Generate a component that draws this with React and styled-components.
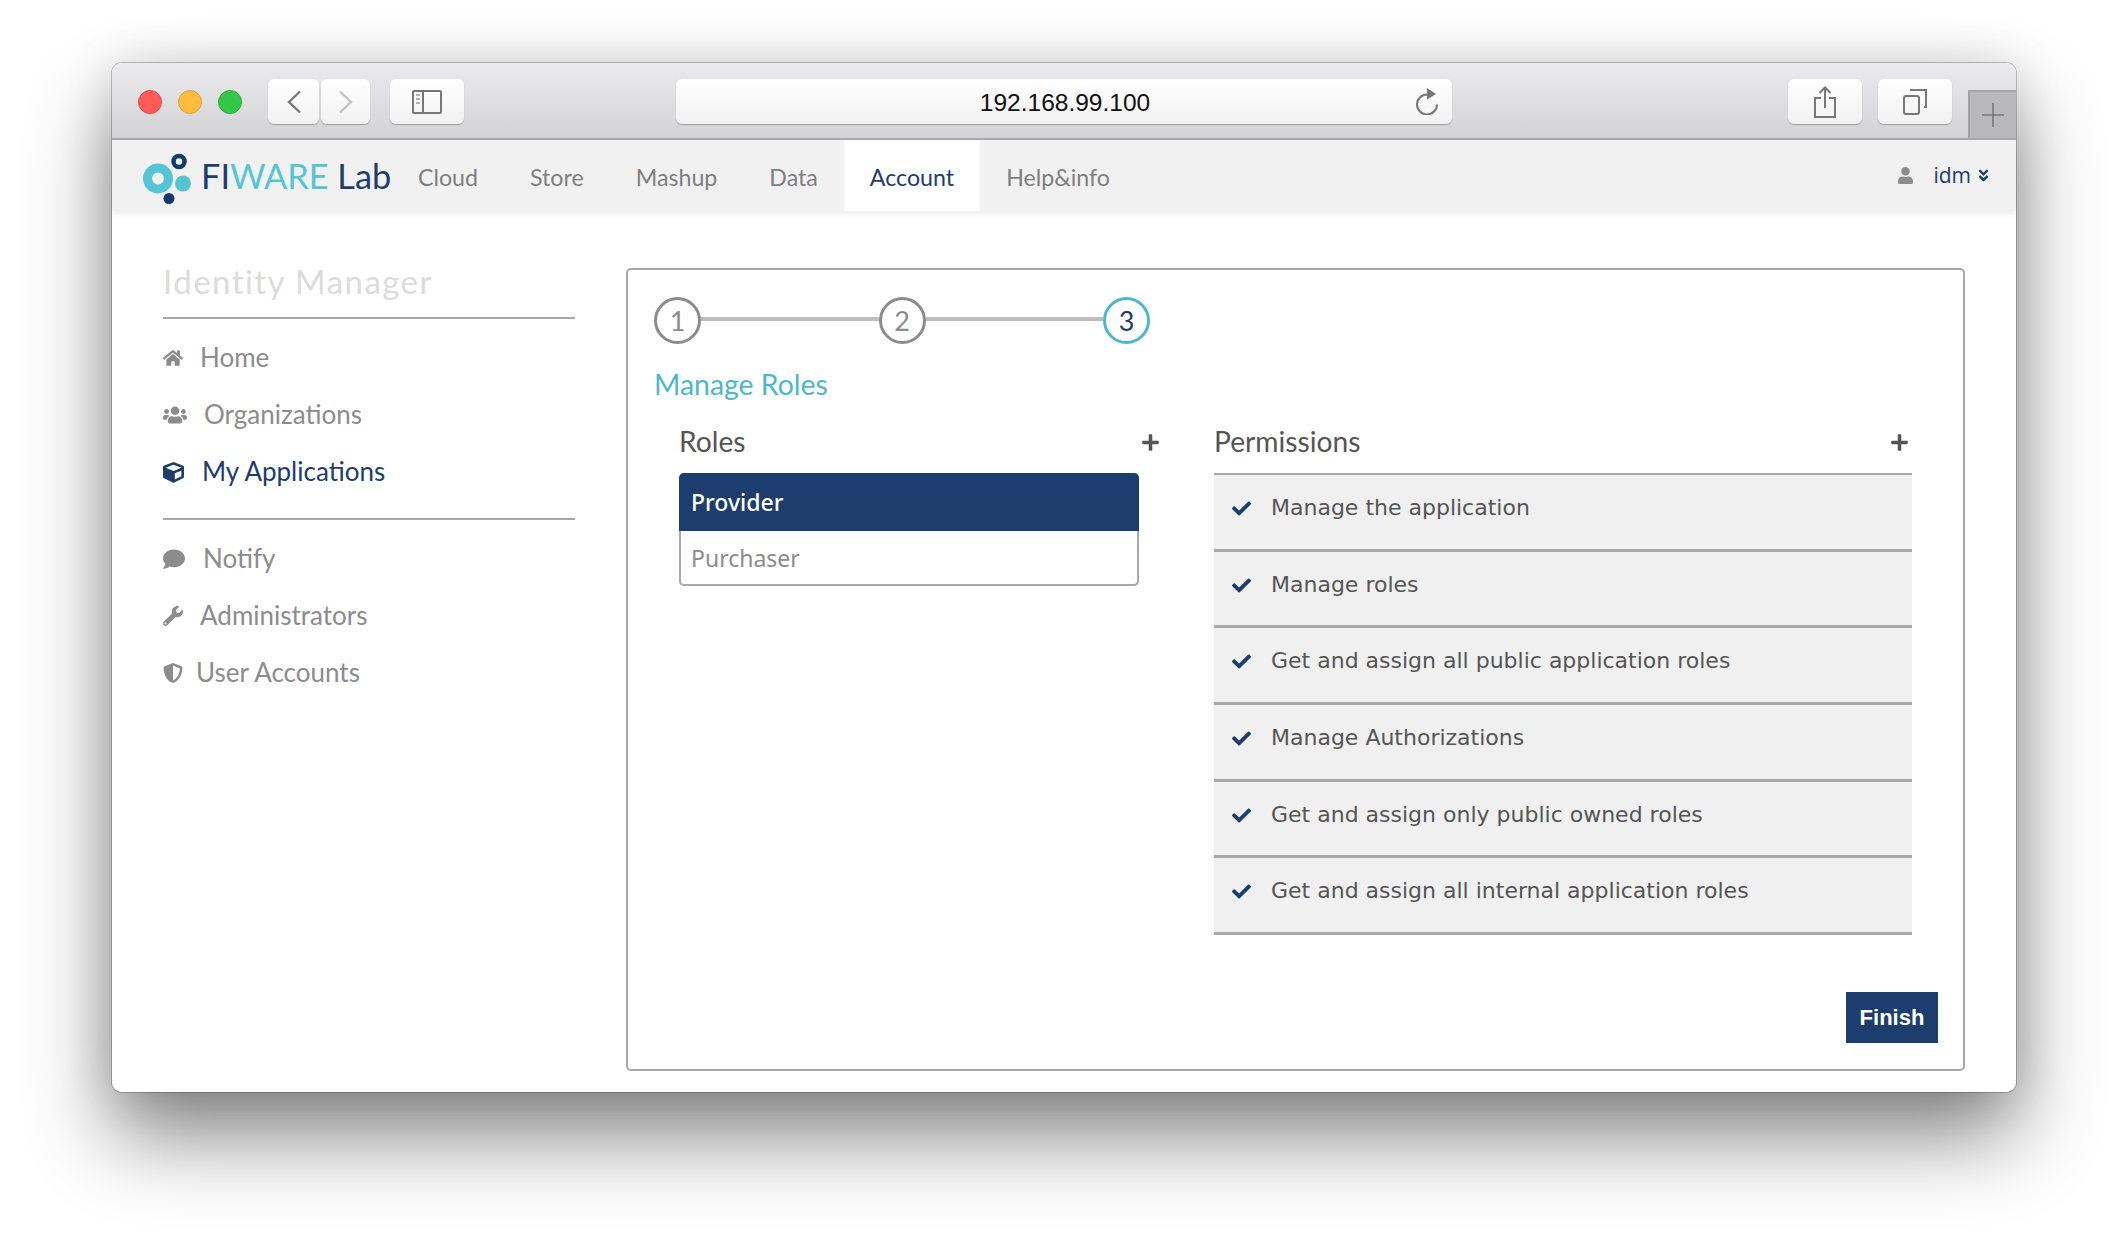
import * as React from "react"
import styled, { createGlobalStyle } from "styled-components"
import {
  FaHome,
  FaUsers,
  FaCube,
  FaComment,
  FaWrench,
  FaShieldAlt,
  FaCheck,
  FaPlus,
  FaUser,
  FaAngleDoubleDown,
} from "react-icons/fa"

const navy = "#1c3d6e"
const teal = "#4db8cb"
const grey = "#8c8c8c"
const rule = "#a8a8a8"

const GlobalStyle = createGlobalStyle`
  html, body {
    margin: 0;
    background: #fff;
  }
  * {
    box-sizing: border-box;
  }
`

const Page = styled.div`
  width: 2128px;
  height: 1252px;
  padding: 63px 112px 0;
  overflow: hidden;
  background: #fff;
`

const Window = styled.div`
  width: 1904px;
  height: 1029px;
  display: flex;
  flex-direction: column;
  background: #fff;
  border-radius: 10px;
  overflow: hidden;
`

const WindowShadow = styled.div`
  border-radius: 10px;
  box-shadow: 0 44px 84px rgba(0, 0, 0, 0.48), 0 0 0 1px rgba(0, 0, 0, 0.22), 0 0 50px rgba(0, 0, 0, 0.12);
`

const TitleBar = styled.div`
  height: 77px;
  flex: none;
  display: flex;
  background: linear-gradient(#ebebed, #d3d2d4);
  border-bottom: 2px solid #a5a5a7;
  padding: 16px 0 0 26px;
`

const Light = styled.span`
  width: 24px;
  height: 24px;
  margin: 11px 16px 0 0;
  border-radius: 50%;
  background: ${props => props.$color};
  border: 1px solid ${props => props.$edge};
`

const ChromeButton = styled.div`
  width: ${props => props.$width}px;
  height: 45px;
  margin-left: ${props => props.$gap}px;
  display: flex;
  align-items: center;
  justify-content: center;
  background: linear-gradient(#ffffff, #f1f1f1);
  border-radius: 6px;
  box-shadow: 0 1px 1px rgba(0, 0, 0, 0.28);
`

const UrlBar = styled.div`
  width: 776px;
  height: 45px;
  margin-left: 212px;
  padding: 0 13px 0 39px;
  display: flex;
  align-items: center;
  background: linear-gradient(#ffffff, #f1f1f1);
  border-radius: 6px;
  box-shadow: 0 1px 1px rgba(0, 0, 0, 0.28);
`

const UrlText = styled.div`
  flex: 1;
  text-align: center;
  padding-top: 2px;
  font: 400 24.5px "Liberation Sans", sans-serif;
  color: #111;
`

const NewTab = styled.div`
  width: 48px;
  height: 48px;
  margin: 11px 0 0 16px;
  align-self: flex-start;
  display: flex;
  align-items: center;
  justify-content: center;
  background: #b9b8ba;
  border: 2px solid #a5a5a7;
  border-right: 0;
  border-bottom: 0;
`

const Nav = styled.nav`
  height: 71px;
  flex: none;
  display: flex;
  align-items: stretch;
  padding: 0 25px 0 30px;
  background: #f1f1f1;
  box-shadow: 0 4px 6px #f1f1f1;
  position: relative;
`

const Logo = styled.div`
  display: flex;
  align-items: center;
  width: 250px;
  flex: none;
  svg {
    flex: none;
  }
`

const LogoText = styled.div`
  margin-left: 9px;
  font: 400 34.3px Lato, sans-serif;
  color: ${navy};
  white-space: nowrap;
`

const LogoAccent = styled.span`
  color: #55c5d6;
`

const NavItem = styled.div`
  display: flex;
  align-items: center;
  padding: 2px 26px 0;
  font: 400 23.2px Lato, sans-serif;
  color: ${props => (props.$active ? navy : "#7f7f7f")};
  background: ${props => (props.$active ? "#fff" : "transparent")};
`

const UserBox = styled.div`
  margin-left: auto;
  display: flex;
  align-items: center;
  font: 400 21px "Open Sans", sans-serif;
  color: ${navy};
  padding-bottom: 1px;
`

const UserName = styled.span`
  margin: 0 5px 0 19px;
`

const Content = styled.div`
  flex: 1;
  min-height: 0;
  display: flex;
  gap: 51px;
  padding: 50px 51px 21px;
`

const Sidebar = styled.aside`
  width: 412px;
  flex: none;
`

const SideTitle = styled.div`
  height: 40px;
  font: 400 33px/40px Lato, sans-serif;
  letter-spacing: 1.45px;
  color: #dcdcdc;
  margin-bottom: 16px;
`

const SideRule = styled.div`
  height: 2px;
  background: ${rule};
  margin-bottom: ${props => props.$after}px;
  margin-top: ${props => props.$before || 0}px;
`

const SideItem = styled.div`
  height: 57px;
  padding-bottom: 1px;
  display: flex;
  align-items: center;
  gap: ${props => props.$gap}px;
  font: 400 26px Lato, sans-serif;
  color: ${props => (props.$active ? navy : grey)};
  svg {
    flex: none;
    margin-top: 2px;
    color: ${props => (props.$active ? navy : grey)};
  }
`

const Panel = styled.section`
  flex: 1;
  margin-top: 7px;
  display: flex;
  flex-direction: column;
  border: 2px solid ${rule};
  border-radius: 5px;
  padding: 27px 25px 26px 26px;
`

const Steps = styled.div`
  width: 496px;
  display: flex;
  align-items: center;
`

const StepCircle = styled.div`
  width: 47px;
  height: 47px;
  flex: none;
  border-radius: 50%;
  display: flex;
  align-items: center;
  justify-content: center;
  border: 3px solid ${props => (props.$current ? teal : grey)};
  color: ${props => (props.$current ? navy : grey)};
  font: 400 27px Lato, sans-serif;
`

const StepLine = styled.div`
  flex: 1;
  height: 4px;
  margin-top: -4px;
  background: #bdbdbd;
`

const PanelTitle = styled.h2`
  margin: 23px 0 0;
  height: 34px;
  font: 400 28.4px/34px Lato, sans-serif;
  color: ${teal};
`

const Columns = styled.div`
  display: flex;
  gap: 54px;
  margin: 24px 26px 0 25px;
`

const RolesColumn = styled.div`
  width: 481px;
  flex: none;
`

const PermissionsColumn = styled.div`
  flex: 1;
`

const ColumnHead = styled.div`
  height: 36px;
  margin-bottom: 12px;
  padding-bottom: 4px;
  display: flex;
  align-items: center;
  justify-content: space-between;
  font: 400 28.2px Lato, sans-serif;
  color: #555;
  svg {
    color: #555;
    margin-top: 3px;
  }
`

const PermissionsHead = styled(ColumnHead)`
  padding-right: 3px;
`

const RoleList = styled.div`
  width: 460px;
  border: 2px solid ${rule};
  border-top: 0;
  border-radius: 5px;
`

const RoleItem = styled.div`
  display: flex;
  align-items: center;
  height: ${props => (props.$selected ? 58 : 53)}px;
  margin: ${props => (props.$selected ? "0 -2px" : "0")};
  padding-left: ${props => (props.$selected ? 12 : 10)}px;
  font: ${props => (props.$selected ? 500 : 400)} 23px "Noto Sans", sans-serif;
  color: ${props => (props.$selected ? "#fff" : grey)};
  background: ${props => (props.$selected ? navy : "transparent")};
  border-radius: ${props => (props.$selected ? "5px 5px 0 0" : "0 0 5px 5px")};
`

const PermissionList = styled.div`
  border-top: 2px solid ${rule};
`

const PermissionRow = styled.div`
  height: 76.67px;
  display: flex;
  align-items: flex-start;
  gap: 20px;
  padding: 18px 0 0 18px;
  background: #f0f0f0;
  border-bottom: 3px solid ${rule};
  font: 400 22px/30px "DejaVu Sans", sans-serif;
  color: #555;
  svg {
    color: ${navy};
    margin-top: 6px;
    flex: none;
  }
`

const Footer = styled.div`
  margin-top: auto;
  display: flex;
  justify-content: flex-end;
`

const FinishButton = styled.button`
  width: 92px;
  height: 51px;
  padding: 0;
  border: 0;
  background: ${navy};
  color: #fff;
  font: 700 22px "Liberation Sans", sans-serif;
`

const sideTop = [
  { label: "Home", icon: <FaHome size={20} />, gap: 17 },
  { label: "Organizations", icon: <FaUsers size={24} />, gap: 17 },
  { label: "My Applications", icon: <FaCube size={21} />, gap: 18 },
]

const sideBottom = [
  { label: "Notify", icon: <FaComment size={22} />, gap: 18 },
  { label: "Administrators", icon: <FaWrench size={20} />, gap: 17 },
  { label: "User Accounts", icon: <FaShieldAlt size={20} />, gap: 13 },
]

const navItems = ["Cloud", "Store", "Mashup", "Data", "Account", "Help&info"]

const permissions = [
  "Manage the application",
  "Manage roles",
  "Get and assign all public application roles",
  "Manage Authorizations",
  "Get and assign only public owned roles",
  "Get and assign all internal application roles",
]

const LogoMark = () => (
  <svg width="50" height="56" viewBox="0 0 50 56">
    <circle cx="16" cy="30.5" r="10.5" fill="none" stroke="#55c5d6" strokeWidth="9" />
    <circle cx="41" cy="35.5" r="8" fill="#55c5d6" />
    <circle cx="37" cy="13.5" r="5.5" fill="none" stroke="#123a6d" strokeWidth="4.5" />
    <circle cx="27" cy="50.5" r="5.5" fill="#123a6d" />
  </svg>
)

const Chevron = ({ left, color }) => (
  <svg width="16" height="24" viewBox="0 0 16 24" fill="none" stroke={color} strokeWidth="2.4">
    <path d={left ? "M14 1.5 3 12l11 10.5" : "M2 1.5 13 12 2 22.5"} />
  </svg>
)

const SidebarIcon = () => (
  <svg width="30" height="24" viewBox="0 0 30 24" fill="none" stroke="#777" strokeWidth="2">
    <rect x="1" y="1" width="28" height="22" rx="1" />
    <path d="M11 1v22" />
    <path d="M4 5h4M4 9h4M4 13h4" strokeWidth="1.6" stroke="#999" />
  </svg>
)

const ReloadIcon = () => (
  <svg width="24" height="27" viewBox="0 0 24 27" fill="none" stroke="#777" strokeWidth="2">
    <path d="M12 6.5A10 10 0 1 0 22 16.5" />
    <path d="M12 0l9 6-9 5.5z" fill="#777" stroke="none" />
  </svg>
)

const ShareIcon = () => (
  <svg width="24" height="32" viewBox="0 0 24 32" fill="none" stroke="#777" strokeWidth="2">
    <path d="M8 12H2v19h20V12h-6" />
    <path d="M12 22V2M6.5 7 12 1.5 17.5 7" />
  </svg>
)

const TabsIcon = () => (
  <svg width="24" height="26" viewBox="0 0 24 26" fill="none" stroke="#777" strokeWidth="2">
    <rect x="1" y="7" width="15" height="18" rx="2" />
    <path d="M7 1h16v17h-2" />
  </svg>
)

const PlusIcon = () => (
  <svg width="22" height="24" viewBox="0 0 22 24" stroke="#777" strokeWidth="1.6">
    <path d="M11 0v24M0 12h22" />
  </svg>
)

const App = () => (
  <Page>
    <GlobalStyle />
    <WindowShadow>
      <Window>
        <TitleBar>
          <Light $color="#fc5b57" $edge="#e24b47" />
          <Light $color="#fdbb40" $edge="#e0a13a" />
          <Light $color="#33c748" $edge="#2aae3c" />
          <ChromeButton $width={51} $gap={10}>
            <Chevron left color="#777" />
          </ChromeButton>
          <ChromeButton $width={49} $gap={2}>
            <Chevron color="#c4c4c4" />
          </ChromeButton>
          <ChromeButton $width={74} $gap={20}>
            <SidebarIcon />
          </ChromeButton>
          <UrlBar>
            <UrlText>192.168.99.100</UrlText>
            <ReloadIcon />
          </UrlBar>
          <ChromeButton $width={74} $gap={336}>
            <ShareIcon />
          </ChromeButton>
          <ChromeButton $width={74} $gap={16}>
            <TabsIcon />
          </ChromeButton>
          <NewTab>
            <PlusIcon />
          </NewTab>
        </TitleBar>
        <Nav>
          <Logo>
            <LogoMark />
            <LogoText>
              FI<LogoAccent>WARE</LogoAccent> Lab
            </LogoText>
          </Logo>
          {navItems.map(item => (
            <NavItem key={item} $active={item === "Account"}>
              {item}
            </NavItem>
          ))}
          <UserBox>
            <FaUser size={17} color="#8c8c8c" />
            <UserName>idm</UserName>
            <FaAngleDoubleDown size={15} />
          </UserBox>
        </Nav>
        <Content>
          <Sidebar>
            <SideTitle>Identity Manager</SideTitle>
            <SideRule $after={10} />
            {sideTop.map(item => (
              <SideItem key={item.label} $gap={item.gap} $active={item.label === "My Applications"}>
                {item.icon}
                {item.label}
              </SideItem>
            ))}
            <SideRule $before={18} $after={10} />
            {sideBottom.map(item => (
              <SideItem key={item.label} $gap={item.gap}>
                {item.icon}
                {item.label}
              </SideItem>
            ))}
          </Sidebar>
          <Panel>
            <Steps>
              <StepCircle>1</StepCircle>
              <StepLine />
              <StepCircle>2</StepCircle>
              <StepLine />
              <StepCircle $current>3</StepCircle>
            </Steps>
            <PanelTitle>Manage Roles</PanelTitle>
            <Columns>
              <RolesColumn>
                <ColumnHead>
                  Roles
                  <FaPlus size={19} />
                </ColumnHead>
                <RoleList>
                  <RoleItem $selected>Provider</RoleItem>
                  <RoleItem>Purchaser</RoleItem>
                </RoleList>
              </RolesColumn>
              <PermissionsColumn>
                <PermissionsHead>
                  Permissions
                  <FaPlus size={19} />
                </PermissionsHead>
                <PermissionList>
                  {permissions.map(item => (
                    <PermissionRow key={item}>
                      <FaCheck size={19} />
                      {item}
                    </PermissionRow>
                  ))}
                </PermissionList>
              </PermissionsColumn>
            </Columns>
            <Footer>
              <FinishButton>Finish</FinishButton>
            </Footer>
          </Panel>
        </Content>
      </Window>
    </WindowShadow>
  </Page>
)

export default App
